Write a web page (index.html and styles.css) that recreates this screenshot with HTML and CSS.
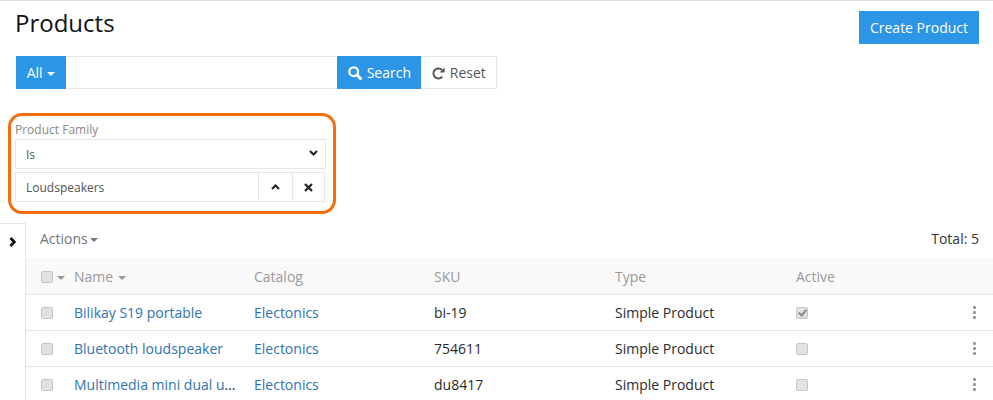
FILE: index.html
```html
<!DOCTYPE html>
<html lang="en">

<head>
    <meta charset="UTF-8">
    <title>Products</title>
    <link rel="stylesheet" href="styles.css">
</head>

<body>

    <header class="page-head">
        <h1>Products</h1>
        <button class="btn btn-primary btn-create">Create Product</button>
    </header>

    <div class="search-bar">
        <button class="btn btn-primary btn-all">All <span class="caret"></span></button>
        <input class="search-input" type="text">
        <button class="btn btn-primary btn-search">
            <svg class="icon" width="14" height="14" viewBox="0 0 14 14"><circle cx="5.7" cy="5.7" r="4.4" fill="none" stroke="currentColor" stroke-width="2.3"/><path d="M9 9l3.6 3.6" stroke="currentColor" stroke-width="3" stroke-linecap="round"/></svg>
            Search
        </button>
        <button class="btn btn-reset">
            <svg class="icon" width="13" height="13" viewBox="0 0 13 13"><path d="M10.3 9.6A5 5 0 1 1 10 3" fill="none" stroke="currentColor" stroke-width="2"/><path d="M12.6 0.6v5h-5z" fill="currentColor"/></svg>
            Reset
        </button>
    </div>

    <section class="filter-box">
        <label class="filter-label">Product Family</label>
        <div class="filter-select">
            <span>Is</span>
            <svg class="select-arrow" width="9" height="6" viewBox="0 0 9 6"><path d="M1 1l3.5 3.5L8 1" fill="none" stroke="#222" stroke-width="2"/></svg>
        </div>
        <div class="filter-value">
            <span class="filter-text">Loudspeakers</span>
            <span class="filter-btn">
                <svg width="9" height="6" viewBox="0 0 9 6"><path d="M1 5l3.5-3.5L8 5" fill="none" stroke="#222" stroke-width="2"/></svg>
            </span>
            <span class="filter-btn">
                <svg width="9" height="9" viewBox="0 0 9 9"><path d="M1 1l7 7M8 1L1 8" fill="none" stroke="#222" stroke-width="2.2"/></svg>
            </span>
        </div>
    </section>

    <div class="grid-wrap">
        <aside class="side-toggle">
            <svg width="8" height="10" viewBox="0 0 8 10"><path d="M1.5 1l3.8 4-3.8 4" fill="none" stroke="#111" stroke-width="2.8"/></svg>
        </aside>
        <div class="grid-main">
            <div class="grid-tools">
                <span class="actions">Actions <span class="caret"></span></span>
                <span class="total">Total: 5</span>
            </div>
            <table class="grid">
                <thead>
                    <tr>
                        <th class="col-check"><input type="checkbox"><span class="caret caret-light"></span></th>
                        <th class="col-name">Name <span class="caret caret-light"></span></th>
                        <th class="col-catalog">Catalog</th>
                        <th class="col-sku">SKU</th>
                        <th class="col-type">Type</th>
                        <th class="col-active">Active</th>
                        <th class="col-menu"></th>
                    </tr>
                </thead>
                <tbody>
                    <tr>
                        <td class="col-check"><input type="checkbox"></td>
                        <td class="cell-name"><a href="#">Bilikay S19 portable</a></td>
                        <td><a href="#">Electonics</a></td>
                        <td>bi-19</td>
                        <td>Simple Product</td>
                        <td><input type="checkbox" checked></td>
                        <td class="cell-menu"><span class="dots"><i></i><i></i><i></i></span></td>
                    </tr>
                    <tr>
                        <td class="col-check"><input type="checkbox"></td>
                        <td class="cell-name"><a href="#">Bluetooth loudspeaker</a></td>
                        <td><a href="#">Electonics</a></td>
                        <td>754611</td>
                        <td>Simple Product</td>
                        <td><input type="checkbox"></td>
                        <td class="cell-menu"><span class="dots"><i></i><i></i><i></i></span></td>
                    </tr>
                    <tr>
                        <td class="col-check"><input type="checkbox"></td>
                        <td class="cell-name"><a href="#">Multimedia mini dual usb speaker</a></td>
                        <td><a href="#">Electonics</a></td>
                        <td>du8417</td>
                        <td>Simple Product</td>
                        <td><input type="checkbox"></td>
                        <td class="cell-menu"><span class="dots"><i></i><i></i><i></i></span></td>
                    </tr>
                </tbody>
            </table>
        </div>
    </div>

</body>

</html>
```

FILE: styles.css
```css
html,
body {
    height: 100%;
    overflow: hidden;
}

body {
    margin: 0;
    background-color: white;
    color: #333;
    font-family: "Open Sans", sans-serif;
    font-size: 14px;
    border-top: 1px solid #ddd;
}

/* header */
.page-head {
    display: flex;
    justify-content: space-between;
    align-items: flex-start;
    padding: 10px 14px 0 15px;
    height: 45px;
}

h1 {
    margin: 0;
    font-size: 24px;
    font-weight: 400;
    line-height: 24px;
    color: #111;
}

.btn {
    border: 0;
    font-family: inherit;
    font-size: 14px;
    cursor: pointer;
}

.btn-primary {
    background-color: #2d95e5;
    color: white;
}

.btn-create {
    width: 120px;
    height: 33px;
    padding: 0;
}

/* search */
.search-bar {
    display: flex;
    margin-left: 16px;
    width: 481px;
    height: 33px;
}

.btn-all {
    width: 50px;
    padding: 0;
}

.search-input {
    flex: 1;
    min-width: 0;
    box-sizing: border-box;
    border: 1px solid #e6e6e6;
    border-left: 0;
    border-right: 0;
    outline: 0;
}

.btn-search {
    width: 84px;
    padding: 0 0 0 1px;
}

.btn-reset {
    width: 76px;
    padding: 0 0 0 1px;
    background-color: white;
    border: 1px solid #e6e6e6;
    border-left: 0;
    color: #555;
}

.icon {
    margin-right: 1px;
    vertical-align: -2px;
}

.caret {
    display: inline-block;
    width: 0;
    height: 0;
    margin-left: 1px;
    vertical-align: 2px;
    border-top: 4px solid currentColor;
    border-left: 4px solid transparent;
    border-right: 4px solid transparent;
}

.caret-light {
    color: #999;
}

/* filter */
.filter-box {
    box-sizing: border-box;
    width: 328px;
    height: 101px;
    margin: 24px 0 0 8px;
    padding: 4px 4px;
    border: 3px solid #f56c0a;
    border-radius: 14px;
}

.filter-label {
    display: block;
    padding-top: 1px;
    font-size: 12px;
    line-height: 18px;
    color: #888;
}

.filter-select,
.filter-value {
    display: flex;
    align-items: center;
    box-sizing: border-box;
    height: 30px;
    border: 1px solid #e6e6e6;
    font-size: 12px;
    color: #555;
}

.filter-select {
    justify-content: space-between;
    width: 311px;
    padding: 0 7px 0 10px;
}

.select-arrow {
    margin-bottom: 2px;
}

.filter-value {
    width: 310px;
    margin-top: 3px;
    padding-left: 10px;
}

.filter-text {
    flex: 1;
}

.filter-btn {
    display: flex;
    align-items: center;
    justify-content: center;
    box-sizing: border-box;
    width: 34px;
    height: 100%;
    border-left: 1px solid #e6e6e6;
}

.filter-btn:last-child {
    width: 32px;
}

/* grid */
.grid-wrap {
    display: flex;
    margin-top: 9px;
}

.side-toggle {
    box-sizing: border-box;
    width: 26px;
    height: 180px;
    padding: 13px 0 0 9px;
    border-top: 1px solid #e6e6e6;
    border-right: 1px solid #e6e6e6;
}

.side-toggle svg {
    display: block;
}

.grid-main {
    flex: 1;
    min-width: 0;
}

.grid-tools {
    display: flex;
    justify-content: space-between;
    align-items: center;
    box-sizing: border-box;
    height: 35px;
    padding: 0 14px 4px;
}

.actions {
    color: #777;
}

.actions .caret {
    margin-left: -1px;
}

.total {
    color: #333;
}

.grid {
    width: 100%;
    table-layout: fixed;
    border-collapse: collapse;
}

.grid th {
    height: 36px;
    padding: 1px 0 0;
    background-color: #f9f9f9;
    border-bottom: 1px solid #e6e6e6;
    font-weight: 400;
    text-align: left;
    color: #999;
    box-sizing: border-box;
}

.grid td {
    height: 36px;
    padding: 0;
    border-bottom: 1px solid #e6e6e6;
    box-sizing: border-box;
    color: #2b2b2b;
}

.grid a {
    color: #2f74ad;
    text-decoration: none;
}

.col-check {
    width: 48px;
    padding-left: 15px !important;
    box-sizing: border-box;
}

.col-check .caret {
    margin-left: 4px;
}

.col-name,
.col-catalog {
    width: 180px;
}

.col-sku,
.col-type {
    width: 181px;
}

.col-active {
    width: 150px;
}

.cell-name {
    padding-right: 14px !important;
    white-space: nowrap;
    overflow: hidden;
    text-overflow: ellipsis;
}

.cell-menu {
    text-align: right;
    padding-right: 17px !important;
}

.dots {
    display: inline-flex;
    flex-direction: column;
    gap: 2px;
    vertical-align: 9px;
}

.dots i {
    display: block;
    width: 3px;
    height: 3px;
    border-radius: 1px;
    background-color: #999;
}

input[type="checkbox"] {
    appearance: none;
    position: relative;
    box-sizing: border-box;
    width: 12px;
    height: 12px;
    margin: 0;
    vertical-align: -1px;
    background: #e2e2e2;
    border: 1px solid #c6c6c6;
    border-radius: 2px;
}

input[type="checkbox"]:checked::after {
    content: "";
    position: absolute;
    left: 3px;
    top: 0;
    width: 3px;
    height: 6px;
    border: solid #888;
    border-width: 0 2px 2px 0;
    transform: rotate(40deg);
}
```
